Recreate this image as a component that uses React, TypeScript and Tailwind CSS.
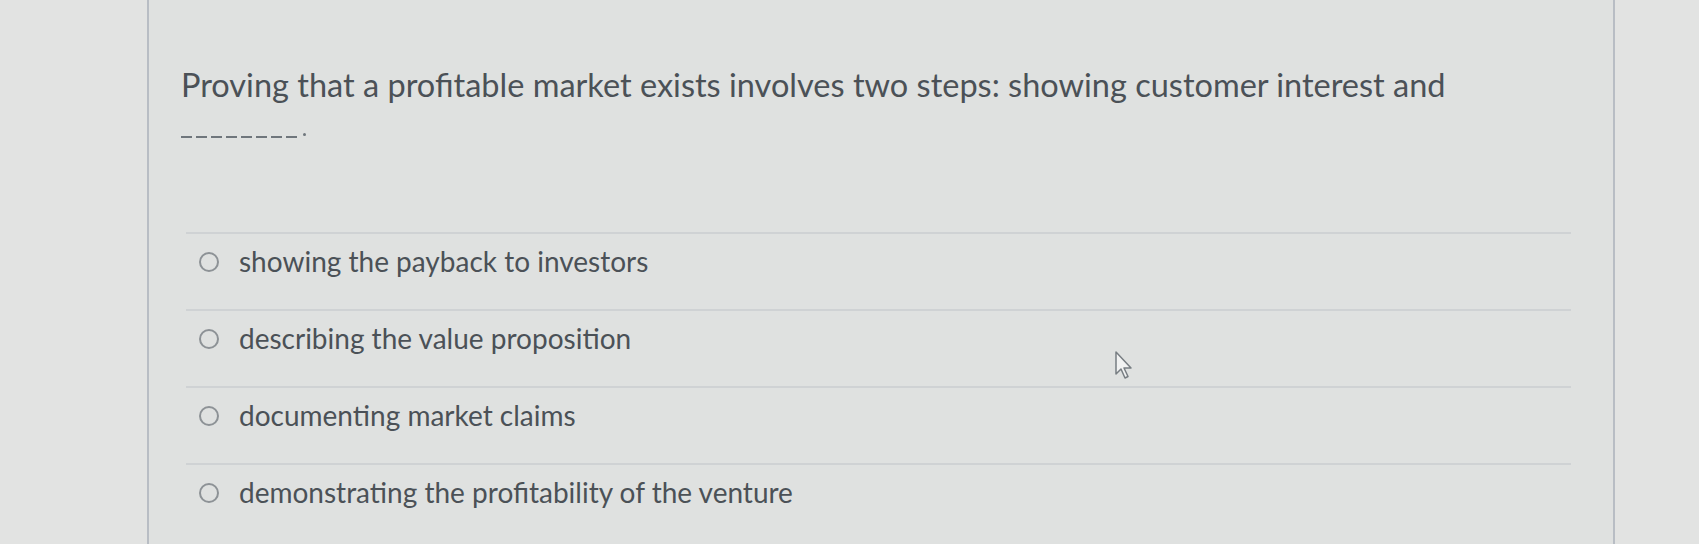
import React from "react";

const options = [
  "showing the payback to investors",
  "describing the value proposition",
  "documenting market claims",
  "demonstrating the profitability of the venture",
];

export default function App() {
  return (
    <div
      className="relative flex w-[1699px] h-[544px] overflow-hidden bg-[#e0e2e1] text-[#4b5157]"
      style={{ fontFamily: "Lato, 'Open Sans', sans-serif" }}
    >
      <div className="w-[147px] shrink-0 bg-[#e2e3e2]" />
      <div className="w-[1468px] shrink-0 border-x-2 border-[#b8bdc4] bg-[#dfe1e0] pl-[32px] pt-[59px]">
        <div className="text-[32.5px] leading-[52px]">
          <p>Proving that a profitable market exists involves two steps: showing customer interest and</p>
          <p className="flex items-center gap-[4px] h-[52px]">
            {Array.from({ length: 8 }).map((_, i) => (
              <span key={i} className="inline-block w-[11px] h-[2px] bg-[#6f767c]" />
            ))}
            <span className="inline-block w-[3px] h-[3px] -mt-[6px] ml-[2px] rounded-full bg-[#6f767c]" />
          </p>
        </div>
        <div className="mt-[69px] ml-[5px] mr-[42px]">
          {options.map((o) => (
            <div
              key={o}
              className="flex items-start h-[77px] border-t-2 border-[#cfd2d4] pl-[13px] pt-[11px]"
            >
              <span className="mt-[7px] w-[20px] h-[20px] rounded-full border-2 border-[#8d9296] shrink-0" />
              <span className="ml-[20px] text-[28px] leading-[32px]">{o}</span>
            </div>
          ))}
        </div>
      </div>
      <div className="flex-1 bg-[#e2e3e2]" />
      <svg
        className="absolute left-[1114px] top-[350px]"
        width="20"
        height="30"
        viewBox="0 0 20 30"
      >
        <path
          d="M2 2 L2 24 L7 19 L11 28 L14 26.5 L10 18 L17 18 Z"
          fill="#f1f2f2"
          stroke="#777d82"
          strokeWidth="1.5"
          strokeLinejoin="round"
        />
      </svg>
    </div>
  );
}
